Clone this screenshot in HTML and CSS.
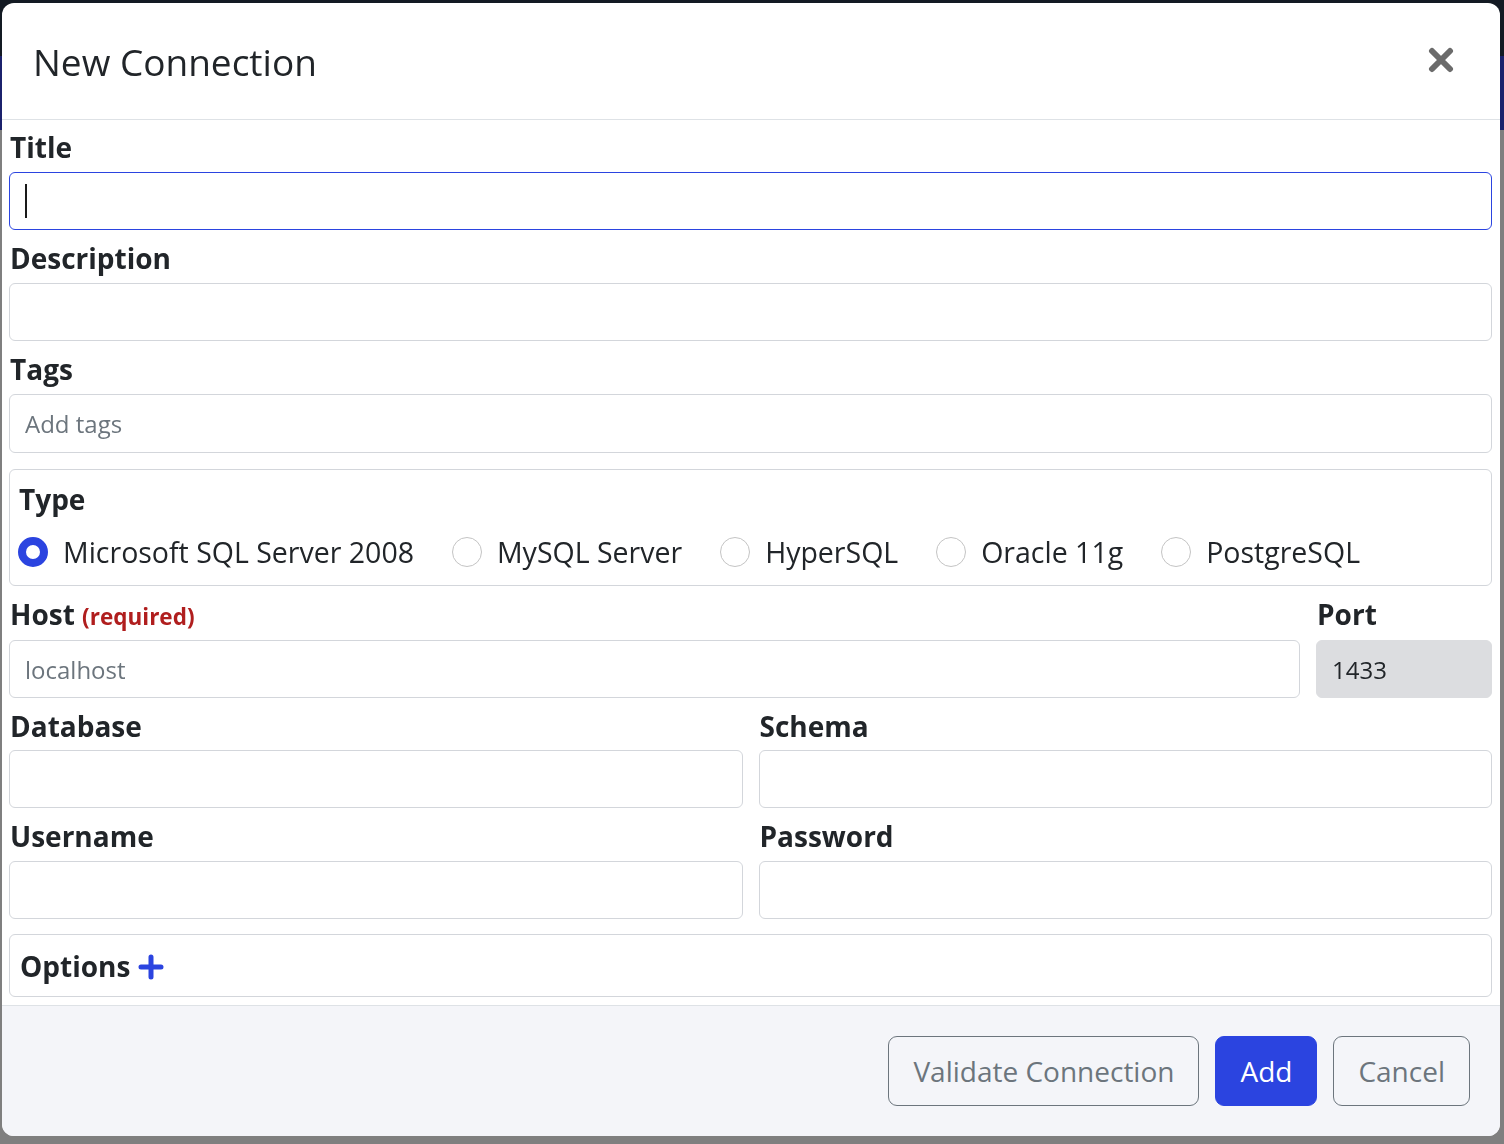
FILE: index.html
```html
<!DOCTYPE html>
<html lang="en">
<head>
  <meta charset="UTF-8" />
  <title>New Connection</title>
  <link rel="stylesheet" href="styles.css">
</head>
<body>
  <div class="page">
    <nav class="topnav"></nav>
    <div class="subnav"></div>
  </div>

  <div class="modal">
    <div class="modal-header">
      <h4 class="modal-title">New Connection</h4>
      <button class="close" aria-label="Close">
        <svg width="26" height="26" viewBox="0 0 26 26">
          <path d="M4 4 L22 22 M22 4 L4 22" stroke="#6b6b6b" stroke-width="6" stroke-linecap="round" fill="none"/>
        </svg>
      </button>
    </div>

    <div class="modal-body">
      <div class="field">
        <label for="title">Title</label>
        <div class="input-wrap">
          <input type="text" id="title" class="form-control focused" />
          <span class="caret"></span>
        </div>
      </div>

      <div class="field">
        <label for="description">Description</label>
        <input type="text" id="description" class="form-control" />
      </div>

      <div class="field tags">
        <label for="tags">Tags</label>
        <input type="text" id="tags" class="form-control tag-input" placeholder="Add tags" />
      </div>

      <div class="group-box type-box">
        <div class="box-title">Type</div>
        <div class="radios">
          <label class="radio"><span class="radio-dot checked"></span>Microsoft SQL Server 2008</label>
          <label class="radio"><span class="radio-dot"></span>MySQL Server</label>
          <label class="radio"><span class="radio-dot"></span>HyperSQL</label>
          <label class="radio"><span class="radio-dot"></span>Oracle 11g</label>
          <label class="radio"><span class="radio-dot"></span>PostgreSQL</label>
        </div>
      </div>

      <div class="row host-row">
        <div class="field">
          <label for="host">Host <span class="required">(required)</span></label>
          <input type="text" id="host" class="form-control" placeholder="localhost" />
        </div>
        <div class="field">
          <label for="port">Port</label>
          <input type="text" id="port" class="form-control readonly" value="1433" readonly />
        </div>
      </div>

      <div class="row two-col">
        <div class="field">
          <label for="database">Database</label>
          <input type="text" id="database" class="form-control" />
        </div>
        <div class="field">
          <label for="schema">Schema</label>
          <input type="text" id="schema" class="form-control" />
        </div>
      </div>

      <div class="row two-col">
        <div class="field">
          <label for="username">Username</label>
          <input type="text" id="username" class="form-control" />
        </div>
        <div class="field">
          <label for="password">Password</label>
          <input type="password" id="password" class="form-control" />
        </div>
      </div>

      <div class="group-box options-box">
        <span class="box-title">Options</span>
        <svg class="plus" width="26" height="26" viewBox="0 0 26 26">
          <path d="M13 3 V23 M3 13 H23" stroke="#2b44e0" stroke-width="5" stroke-linecap="round" fill="none"/>
        </svg>
      </div>
    </div>

    <div class="modal-footer">
      <button class="btn btn-outline">Validate Connection</button>
      <button class="btn btn-primary">Add</button>
      <button class="btn btn-outline">Cancel</button>
    </div>
  </div>
</body>
</html>
```

FILE: styles.css
```css
*, *::before, *::after {
  box-sizing: border-box;
}

body {
  margin: 0;
  height: 1144px;
  overflow: hidden;
  background: #7f7f7f;
  font-family: 'Open Sans', 'Noto Sans', sans-serif;
  color: #212529;
}

/* Pagina por tras do modal (escurecida) */
.topnav {
  height: 56px;
  background: #131a23;
}

.subnav {
  height: 74px;
  background: #1b216c;
}

/* Modal */
.modal {
  position: fixed;
  top: 3px;
  left: 2px;
  width: 1498px;
  height: 1133px;
  background: #fff;
  border-radius: 12px;
  overflow: hidden;
  display: flex;
  flex-direction: column;
}

.modal-header {
  height: 117px;
  flex-shrink: 0;
  display: flex;
  align-items: center;
  justify-content: space-between;
  padding: 0 46px 0 31px;
  border-bottom: 1px solid #dee2e6;
}

.modal-title {
  margin: 0;
  font-size: 37px;
  font-weight: 400;
  color: #212529;
}

.close {
  border: none;
  background: none;
  padding: 0;
  width: 26px;
  height: 26px;
  margin-top: -2px;
}

.close svg {
  display: block;
}

.modal-body {
  padding: 7px 8px 8px 7px;
  display: flex;
  flex-direction: column;
}

/* Campos */
.field {
  margin-bottom: 8px;
}

.field label,
.box-title {
  display: block;
  font-weight: 700;
  font-size: 28px;
  line-height: 40px;
  margin-bottom: 5px;
  padding-left: 1px;
}

.required {
  color: #b01e1e;
  font-size: 22.5px;
  line-height: 1;
}

.form-control {
  display: block;
  width: 100%;
  height: 58px;
  padding: 0 15px;
  border: 1px solid #d3d6db;
  border-radius: 6px;
  background: #fff;
  font-family: inherit;
  font-size: 24px;
  color: #212529;
  outline: none;
}

.form-control::placeholder {
  color: #6c757d;
}

.form-control.focused {
  border-color: #2b44e0;
}

.form-control.readonly {
  background: #dcdde0;
  border-color: #dcdde0;
}

.input-wrap {
  position: relative;
}

.caret {
  position: absolute;
  left: 16px;
  top: 12px;
  width: 2px;
  height: 34px;
  background: #1a1a1a;
}

.tags {
  margin-bottom: 16px;
}

.tag-input {
  height: 59px;
}

/* Caixas agrupadas */
.group-box {
  border: 1px solid #d3d6db;
  border-radius: 6px;
}

.type-box {
  padding: 9px 8px 13px;
  margin-bottom: 8px;
}

.type-box .box-title {
  margin-bottom: 13px;
}

.radios {
  display: flex;
  gap: 38px;
}

.radio {
  display: flex;
  align-items: center;
  gap: 15px;
  font-size: 28.5px;
  line-height: 40px;
}

.radio-dot {
  width: 30px;
  height: 30px;
  border-radius: 50%;
  border: 1px solid #c4c4c4;
  background: #fff;
}

.radio-dot.checked {
  border: 8px solid #2b44e0;
}

.row {
  display: grid;
  gap: 16px;
}

.host-row {
  grid-template-columns: 1fr 176px;
}

.host-row label {
  margin-bottom: 6px;
}

.two-col {
  grid-template-columns: 1fr 1fr;
}

.two-col label {
  margin-bottom: 4px;
}

.two-col + .two-col label {
  margin-bottom: 5px;
}

.options-box {
  margin-top: 7px;
  height: 63px;
  padding: 0 9px;
  display: flex;
  align-items: center;
  gap: 8px;
}

.options-box .box-title {
  display: inline;
  margin: 0;
}

.plus {
  margin-top: 2px;
}

/* Rodape */
.modal-footer {
  flex: 1;
  background: #f4f5f9;
  border-top: 1px solid #dee2e6;
  display: flex;
  justify-content: flex-end;
  align-items: center;
  gap: 16px;
  padding: 0 30px 0 0;
}

.btn {
  height: 70px;
  padding: 0 24px;
  border-radius: 9px;
  font-family: inherit;
  font-size: 28px;
  cursor: pointer;
}

.btn-outline {
  background: transparent;
  border: 1px solid #6c757d;
  color: #6c757d;
}

.btn-primary {
  background: #2b44e0;
  border: 1px solid #2b44e0;
  color: #fff;
}
```
